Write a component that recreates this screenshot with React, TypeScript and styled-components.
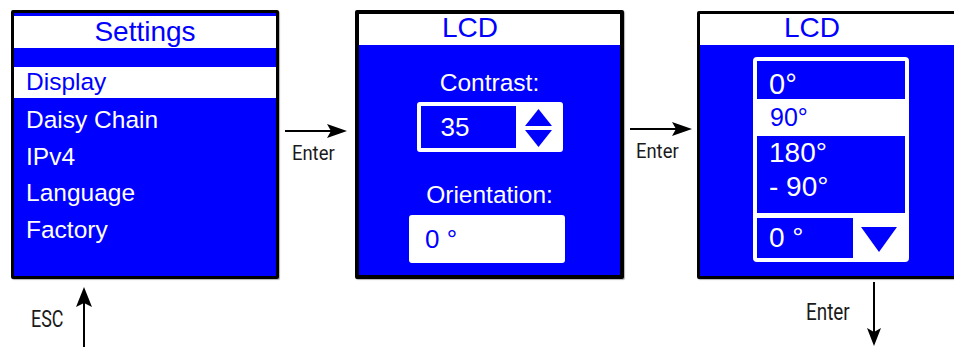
import React from "react";
import styled, { createGlobalStyle } from "styled-components";

const BLUE = "#0000ff";

const GlobalStyle = createGlobalStyle`
  html, body {
    margin: 0;
    padding: 0;
    background: #ffffff;
    overflow: hidden;
  }
  body {
    font-family: "Liberation Sans", Arial, sans-serif;
  }
`;

const Canvas = styled.div`
  width: 954px;
  height: 347px;
  overflow: hidden;
  box-sizing: border-box;
  padding: 10px 0 0 11px;
  display: flex;
  flex-direction: column;
`;

const ScreenRow = styled.div`
  display: flex;
  align-items: flex-start;
  height: 269px;
  flex: none;
`;

const Screen = styled.div<{ $width: number; $border: number; $drop?: number }>`
  box-sizing: border-box;
  flex: none;
  width: ${p => p.$width}px;
  height: ${p => 269 - (p.$drop ?? 0)}px;
  margin-top: ${p => p.$drop ?? 0}px;
  border: ${p => p.$border}px solid #000;
  border-radius: 2px;
  background: ${BLUE};
  box-shadow: 1px 1px 1px rgba(0, 0, 0, 0.3);
  display: flex;
  flex-direction: column;
  overflow: hidden;
`;

const ScreenTitle = styled.div<{ $band?: number; $height: number; $lineHeight: number; $shift?: number }>`
  flex: none;
  margin-top: ${p => p.$band ?? 0}px;
  height: ${p => p.$height}px;
  line-height: ${p => p.$lineHeight}px;
  padding-right: ${p => p.$shift ?? 0}px;
  background: #ffffff;
  color: ${BLUE};
  font-size: 28px;
  text-align: center;
`;

const MenuItem = styled.div<{ $selected?: boolean }>`
  flex: none;
  padding-left: 12px;
  font-size: 24.5px;
  white-space: nowrap;
  color: ${p => (p.$selected ? BLUE : "#ffffff")};
  background: ${p => (p.$selected ? "#ffffff" : "transparent")};
  height: ${p => (p.$selected ? 31 : 36.5)}px;
  line-height: ${p => (p.$selected ? 29 : 36.5)}px;
  margin: ${p => (p.$selected ? "19px 0 4px" : "0")};
`;

const ScreenBody = styled.div<{ $pad: number }>`
  display: flex;
  flex-direction: column;
  align-items: center;
  padding-top: ${p => p.$pad}px;
`;

const FieldLabel = styled.div<{ $gap: number }>`
  margin-top: ${p => p.$gap}px;
  font-size: 24.5px;
  line-height: 28px;
  color: #ffffff;
`;

const Spinner = styled.div`
  box-sizing: border-box;
  margin-top: 5px;
  width: 146px;
  height: 50px;
  border: 4px solid #ffffff;
  border-radius: 3px;
  background: #ffffff;
  display: flex;
  align-items: flex-start;
`;

const SpinValue = styled.div`
  box-sizing: border-box;
  width: 95px;
  height: 100%;
  padding-left: 20px;
  background: ${BLUE};
  color: #ffffff;
  font-size: 26px;
  line-height: 42px;
`;

const SpinArrows = styled.svg`
  margin: 3px 0 0 9px;
  flex: none;
`;

const ValueBox = styled.div`
  box-sizing: border-box;
  margin: 6px 5px 0 0;
  width: 156px;
  height: 48px;
  padding-left: 16px;
  border-radius: 3px;
  background: #ffffff;
  color: ${BLUE};
  font-size: 26px;
  line-height: 48px;
`;

const ListBox = styled.div`
  box-sizing: border-box;
  width: 156px;
  border: 4px solid #ffffff;
  border-radius: 4px;
  background: #ffffff;
  display: flex;
  flex-direction: column;
`;

const Option = styled.div<{ $active?: boolean; $height: number; $size: number; $lineHeight: number; $padTop?: number; $padLeft: number }>`
  box-sizing: border-box;
  height: ${p => p.$height}px;
  padding: ${p => p.$padTop ?? 0}px 0 0 ${p => p.$padLeft}px;
  font-size: ${p => p.$size}px;
  line-height: ${p => p.$lineHeight}px;
  white-space: nowrap;
  background: ${p => (p.$active ? BLUE : "#ffffff")};
  color: ${p => (p.$active ? "#ffffff" : BLUE)};
`;

const SelectRow = styled.div`
  margin-top: 5px;
  height: 40px;
  display: flex;
  align-items: flex-start;
`;

const SelectValue = styled.div`
  box-sizing: border-box;
  width: 96px;
  height: 40px;
  padding-left: 12px;
  background: ${BLUE};
  color: #ffffff;
  font-size: 28px;
  line-height: 40px;
`;

const SelectCaret = styled.svg`
  margin: 9px 0 0 8px;
  flex: none;
`;

const Connector = styled.div<{ $width: number }>`
  flex: none;
  width: ${p => p.$width}px;
  display: flex;
  flex-direction: column;
  align-items: flex-start;
`;

const SideArrow = styled.svg<{ $top: number }>`
  margin: ${p => p.$top}px 0 0 6px;
`;

const FlowLabel = styled.span<{ $size: number; $scale?: number }>`
  display: block;
  flex: none;
  font-family: Roboto, "Liberation Sans", sans-serif;
  font-size: ${p => p.$size}px;
  line-height: ${p => p.$size}px;
  color: #1a1a1a;
  white-space: nowrap;
  transform: scaleX(${p => p.$scale ?? 1});
  transform-origin: left top;
`;

const SideLabel = styled(FlowLabel)<{ $left: number; $gap: number }>`
  margin: ${p => p.$gap}px 0 0 ${p => p.$left}px;
`;

const Footer = styled.div`
  flex: none;
  height: 68px;
  display: flex;
  align-items: flex-start;
`;

const FooterGroup = styled.div<{ $left: number }>`
  display: flex;
  align-items: flex-start;
  margin-left: ${p => p.$left}px;
`;

const FooterLabel = styled(FlowLabel)<{ $top: number }>`
  margin-top: ${p => p.$top}px;
`;

const FooterArrow = styled.svg<{ $top: number; $left: number }>`
  flex: none;
  margin: ${p => p.$top}px 0 0 ${p => p.$left}px;
`;

const RightArrow: React.FC<{ top: number }> = ({ top }) => (
  <SideArrow $top={top} width="62" height="16" viewBox="0 0 62 16">
    <line x1="0" y1="8" x2="46" y2="8" stroke="#000" strokeWidth="2" />
    <polygon points="42,1 62,8 42,15 46,8" fill="#000" />
  </SideArrow>
);

export default function App() {
  return (
    <>
      <GlobalStyle />
      <Canvas>
        <ScreenRow>
          <Screen $width={268} $border={3}>
            <ScreenTitle $band={3} $height={32} $lineHeight={31}>Settings</ScreenTitle>
            <MenuItem $selected>Display</MenuItem>
            <MenuItem>Daisy Chain</MenuItem>
            <MenuItem>IPv4</MenuItem>
            <MenuItem>Language</MenuItem>
            <MenuItem>Factory</MenuItem>
          </Screen>

          <Connector $width={76}>
            <RightArrow top={113} />
            <SideLabel $size={20} $scale={0.92} $left={13} $gap={4}>Enter</SideLabel>
          </Connector>

          <Screen $width={269} $border={4}>
            <ScreenTitle $height={31} $lineHeight={27} $shift={39}>LCD</ScreenTitle>
            <ScreenBody $pad={0}>
              <FieldLabel $gap={24}>Contrast:</FieldLabel>
              <Spinner>
                <SpinValue>35</SpinValue>
                <SpinArrows width="27" height="38" viewBox="0 0 27 38">
                  <polygon points="13.5,0 27,17 0,17" fill={BLUE} />
                  <polygon points="0,21 27,21 13.5,38" fill={BLUE} />
                </SpinArrows>
              </Spinner>
              <FieldLabel $gap={29}>Orientation:</FieldLabel>
              <ValueBox>0 °</ValueBox>
            </ScreenBody>
          </Screen>

          <Connector $width={73}>
            <RightArrow top={111} />
            <SideLabel $size={20} $scale={0.92} $left={12} $gap={4}>Enter</SideLabel>
          </Connector>

          <Screen $width={268} $border={3} $drop={1}>
            <ScreenTitle $height={31} $lineHeight={27} $shift={38}>LCD</ScreenTitle>
            <ScreenBody $pad={12}>
              <ListBox>
                <Option $active $height={38} $size={29} $lineHeight={32} $padTop={7} $padLeft={12}>0°</Option>
                <Option $height={37} $size={25} $lineHeight={28} $padTop={4} $padLeft={13}>90°</Option>
                <Option $active $height={77} $size={28} $lineHeight={34} $padLeft={12}>
                  <div>180°</div>
                  <div>- 90°</div>
                </Option>
                <SelectRow>
                  <SelectValue>0 °</SelectValue>
                  <SelectCaret width="36" height="25" viewBox="0 0 36 25">
                    <polygon points="0,0 36,0 18,25" fill={BLUE} />
                  </SelectCaret>
                </SelectRow>
              </ListBox>
            </ScreenBody>
          </Screen>
        </ScreenRow>

        <Footer>
          <FooterGroup $left={20}>
            <FooterLabel $size={23} $scale={0.78} $top={29}>ESC</FooterLabel>
            <FooterArrow $top={8} $left={3} width="16" height="60" viewBox="0 0 16 60">
              <line x1="8" y1="14" x2="8" y2="60" stroke="#000" strokeWidth="2" />
              <polygon points="8,0 16,20 8,16 0,20" fill="#000" />
            </FooterArrow>
          </FooterGroup>
          <FooterGroup $left={714}>
            <FooterLabel $size={23} $scale={0.82} $top={22}>Enter</FooterLabel>
            <FooterArrow $top={3} $left={8} width="14" height="64" viewBox="0 0 14 64">
              <line x1="7" y1="0" x2="7" y2="50" stroke="#000" strokeWidth="2" />
              <polygon points="0,46 7,50 14,46 7,64" fill="#000" />
            </FooterArrow>
          </FooterGroup>
        </Footer>
      </Canvas>
    </>
  );
}
